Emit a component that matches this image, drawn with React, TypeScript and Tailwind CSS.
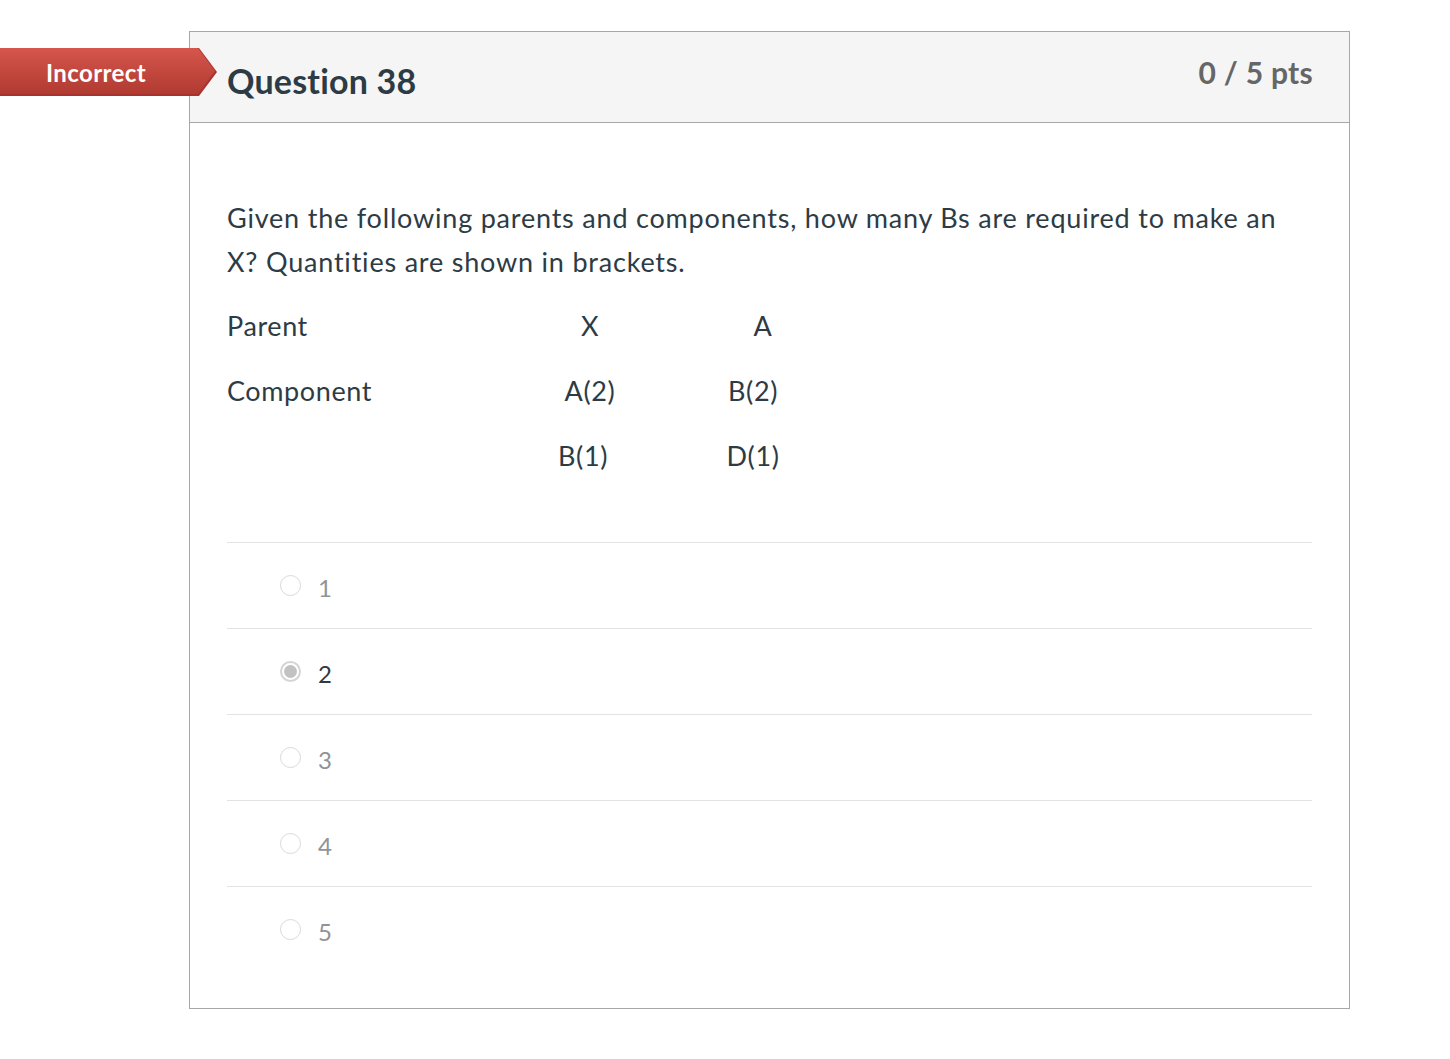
const answers = [
  { label: '1', selected: false },
  { label: '2', selected: true },
  { label: '3', selected: false },
  { label: '4', selected: false },
  { label: '5', selected: false },
];

function Radio({ selected }: { selected: boolean }) {
  if (selected) {
    return (
      <span className="flex h-[21px] w-[21px] items-center justify-center rounded-full border-2 border-[#d4d4d4] bg-white">
        <span className="h-[13px] w-[13px] rounded-full bg-[#c2c2c2]" />
      </span>
    );
  }
  return <span className="h-[21px] w-[21px] rounded-full border border-[#d9d9d9] bg-white" />;
}

export default function App() {
  return (
    <div className="min-h-screen bg-white font-['Lato','Noto_Sans',sans-serif] text-[#2d3b45]">
      <div className="relative pl-[189px] pt-[31px]">
        {/* status badge hangs over the card edge */}
        <div className="absolute left-0 top-[48px] h-[48px] w-[217px] bg-[#a8332c] [clip-path:polygon(0_0,199px_0,217px_24px,199px_48px,0_48px)]">
          <div className="flex h-[46px] w-[215px] items-center bg-gradient-to-b from-[#d6564c] to-[#b03a31] pl-[46px] pt-[3px] [clip-path:polygon(0_0,198px_0,215px_23px,198px_46px,0_46px)]">
            <span className="text-[24px] font-bold leading-none tracking-[0.4px] text-white">Incorrect</span>
          </div>
        </div>

        <div className="flex h-[978px] w-[1161px] flex-col border border-[#a7a7a7]">
          <div className="flex h-[91px] items-start justify-between border-b border-[#a7a7a7] bg-[#f5f5f5] pl-[37px] pr-[36px]">
            <h2 className="pt-[32px] text-[34px] font-bold leading-none tracking-[0.2px] text-[#2d3b45]">Question 38</h2>
            <span className="pt-[25px] text-[30px] font-bold leading-none tracking-[0.3px] text-[#666666]">0 / 5 pts</span>
          </div>

          <div className="px-[37px] pt-[73px]">
            <p className="text-[27px] leading-[44px] tracking-[0.8px]">
              Given the following parents and components, how many Bs are required to make an X? Quantities are
              shown in brackets.
            </p>

            <div className="mt-[9px] grid grid-cols-[278px_170px_170px] text-[27px] leading-[65px] tracking-[0.6px]">
              <div>Parent</div>
              <div className="text-center">X</div>
              <div className="pl-[6px] text-center">A</div>
              <div>Component</div>
              <div className="text-center">A(2)</div>
              <div className="pr-[14px] text-center">B(2)</div>
              <div />
              <div className="pr-[14px] text-center">B(1)</div>
              <div className="pr-[14px] text-center">D(1)</div>
            </div>

            <div className="mt-[54px]">
              {answers.map((a) => (
                <div key={a.label} className="flex h-[86px] items-center gap-[17px] border-t border-[#e3e3e3] pl-[53px]">
                  <Radio selected={a.selected} />
                  <span className={`pt-[4px] text-[24px] ${a.selected ? 'text-[#2d3b45]' : 'text-[#8f9499]'}`}>
                    {a.label}
                  </span>
                </div>
              ))}
            </div>
          </div>
        </div>
      </div>
    </div>
  );
}
